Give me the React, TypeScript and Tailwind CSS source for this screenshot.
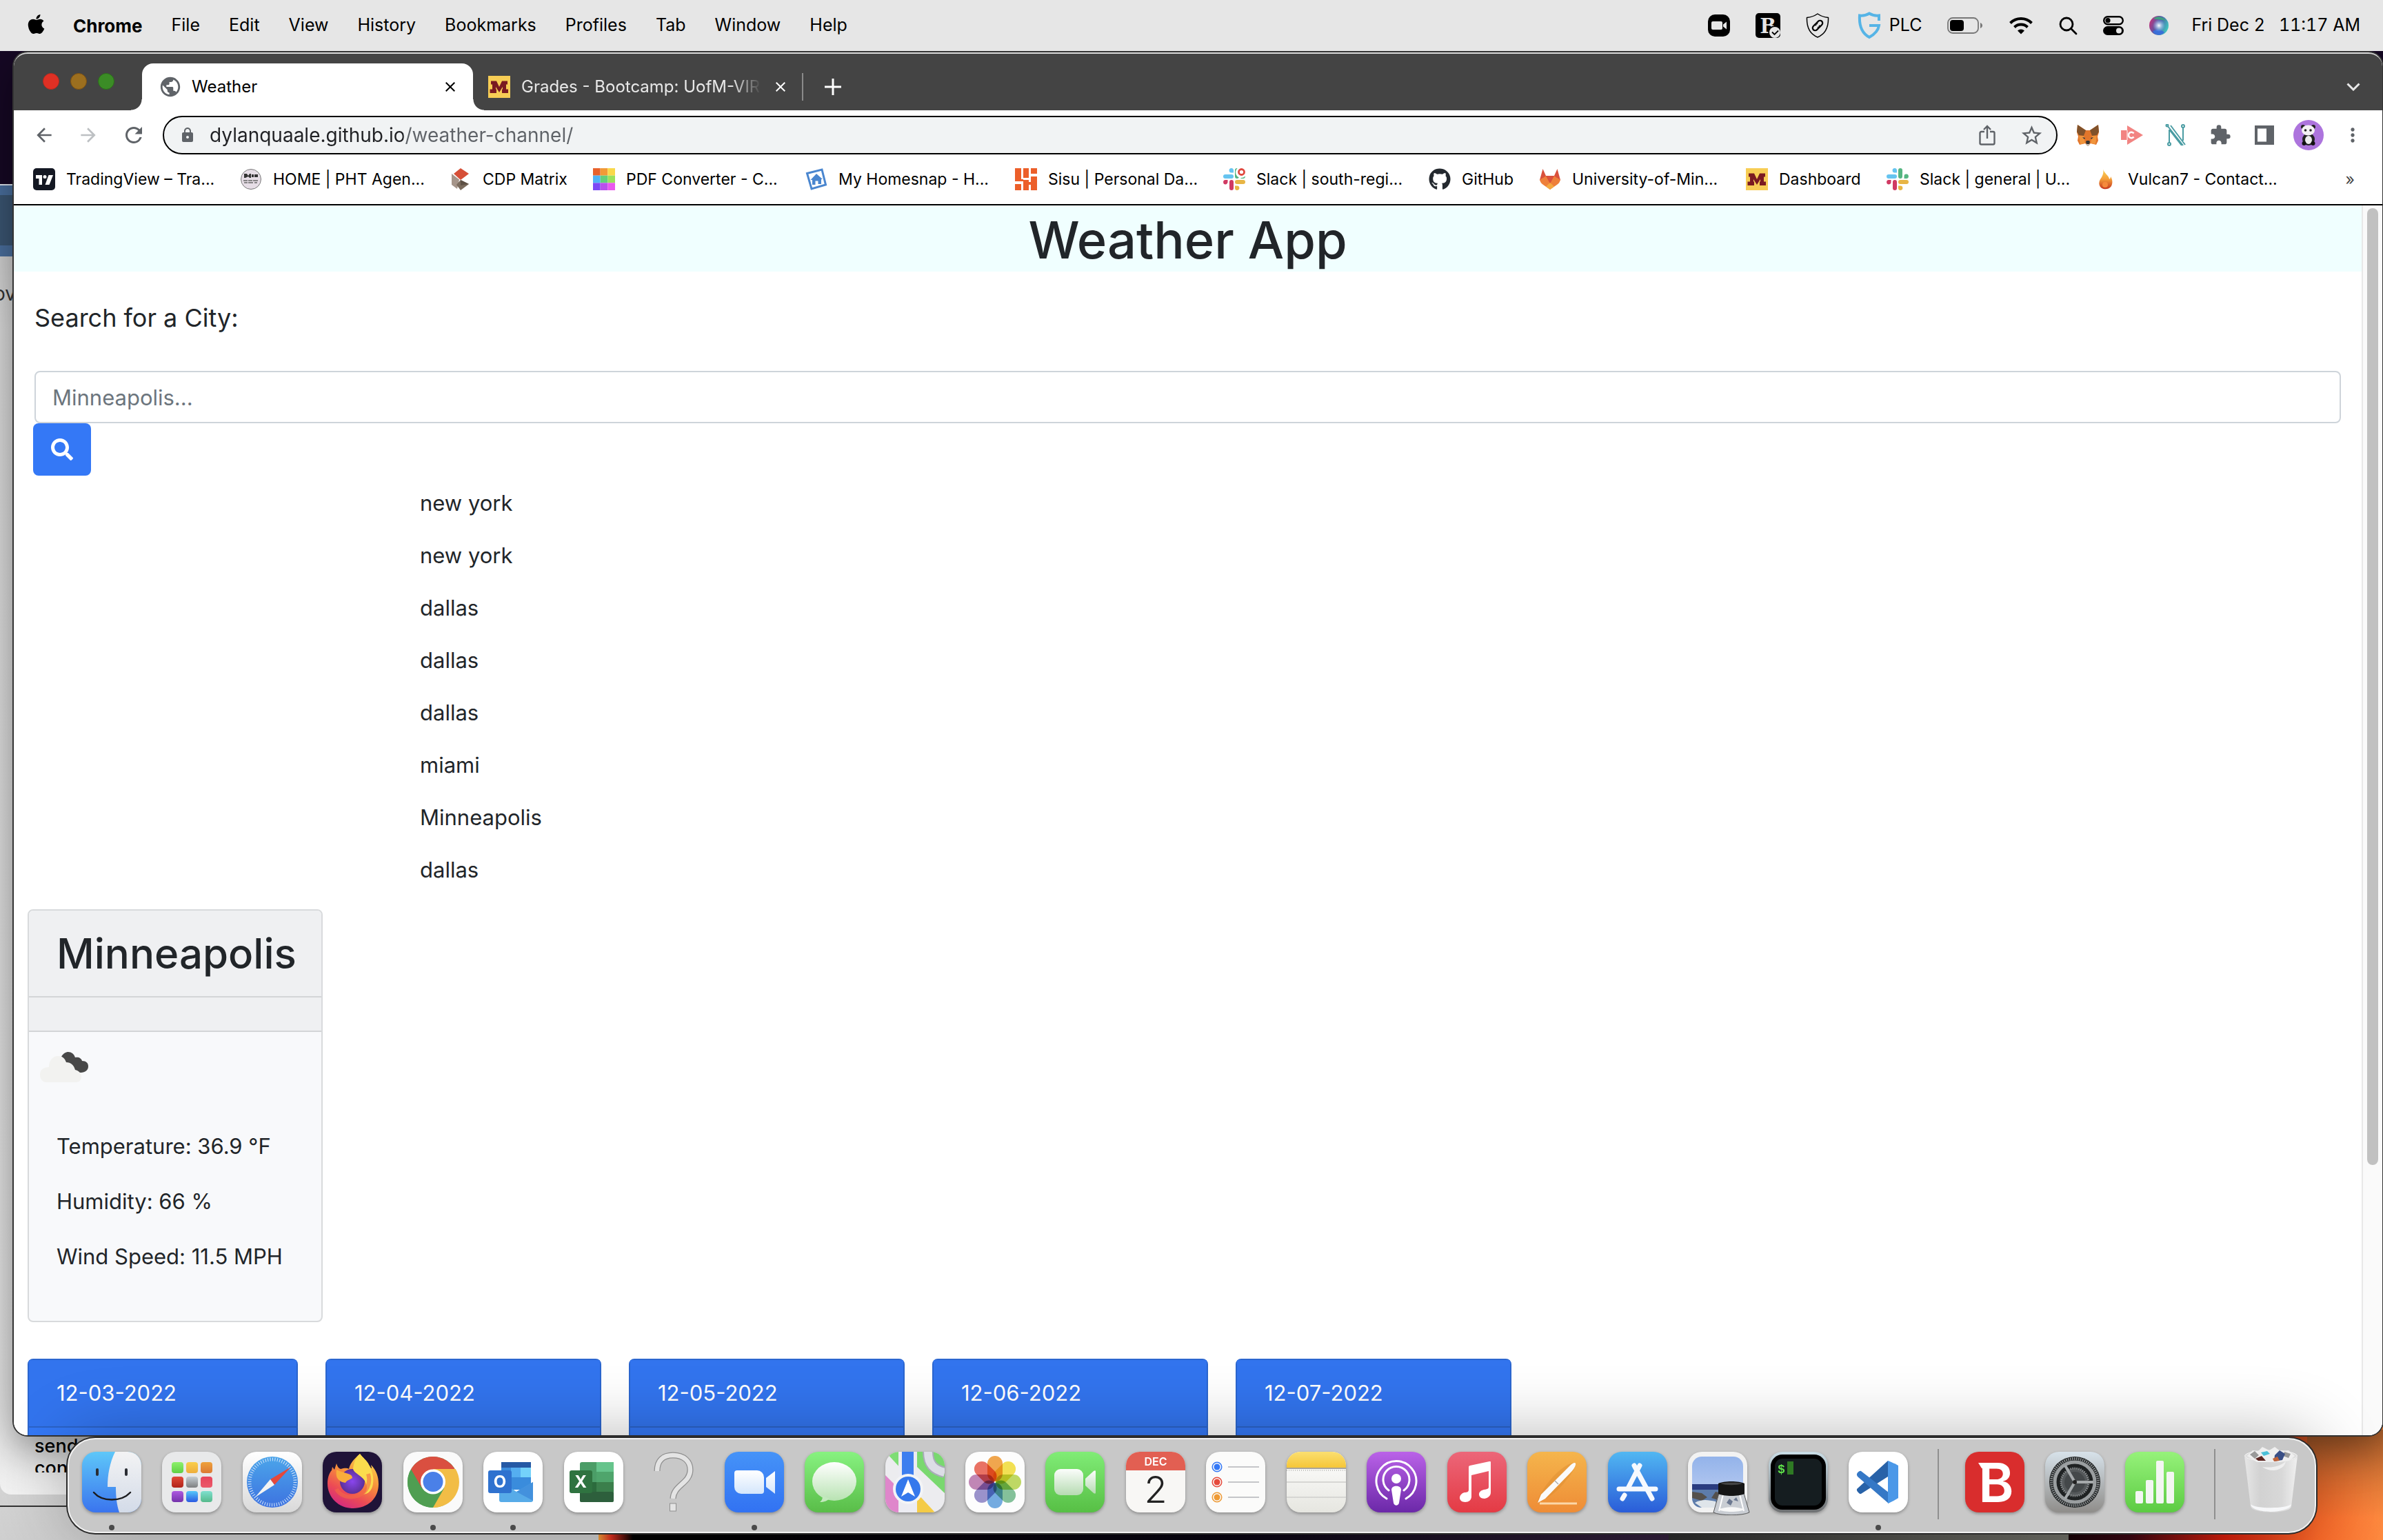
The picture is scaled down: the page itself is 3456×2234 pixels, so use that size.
import type { ReactNode } from "react";
import { FaApple, FaGithub, FaSearch } from "react-icons/fa";
import {
  MdArrowBack,
  MdArrowForward,
  MdClose,
  MdExtension,
  MdLock,
  MdMoreVert,
  MdPublic,
  MdRefresh,
  MdStarBorder,
} from "react-icons/md";

/* ---------- Menu bar ---------- */

const menus = ["File", "Edit", "View", "History", "Bookmarks", "Profiles", "Tab", "Window", "Help"];

function ZoomStatusIcon() {
  return (
    <svg viewBox="0 0 32 32" className="h-8 w-8">
      <rect width="32" height="32" rx="10" fill="#000" />
      <rect x="5" y="10" width="16" height="12" rx="2" fill="#e6e6e6" />
      <path d="M22 14.500 27 10.500V21.500L22 17.500z" fill="#e6e6e6" />
    </svg>
  );
}

function BitdefenderStatusIcon() {
  return (
    <svg viewBox="0 0 36 36" className="h-9 w-9">
      <rect width="36" height="36" rx="5" fill="#000" />
      <text x="7" y="29" fontFamily="Liberation Serif, serif" fontWeight="700" fontSize="34" fill="#e6e6e6">
        B
      </text>
      <circle cx="27.500" cy="27.500" r="9.200" fill="#000" />
      <circle cx="28" cy="28" r="8" fill="#e6e6e6" />
      <path d="m24 27.500 3.500 3.500 5.500-5.500" fill="none" stroke="#000" strokeWidth="1.800" />
    </svg>
  );
}

function ShieldLinkIcon() {
  return (
    <svg viewBox="0 0 34 36" className="h-9 w-[34px]" fill="none" stroke="#000" strokeLinejoin="round">
      <path d="M17 1c5 3.500 10 5 15.500 5.500C33 20 29 30 17 35 5 30 1 20 1.500 6.500 7 6 12 4.500 17 1z" strokeWidth="1.500" />
      <g strokeWidth="2.200" strokeLinecap="round" transform="rotate(45 17 18)">
        <path d="M14.500 19.500a3.500 3.500 0 0 1-1.200-2.500v-4a3.700 3.700 0 0 1 7.400 0v4c0 1-.4 1.800-1 2.500" />
        <path d="M19.500 16.500a3.500 3.500 0 0 1 1.200 2.500v4a3.700 3.700 0 0 1-7.400 0v-4c0-1 .4-1.800 1-2.500" />
      </g>
    </svg>
  );
}

function ShieldGIcon() {
  return (
    <svg viewBox="0 0 34 40" className="h-10 w-[34px]" fill="none" stroke="#56b4e6" strokeWidth="4">
      <path d="M31 13V5.500C26 6 21 5 17 2.500 13 5 8 6 3 5.500 2 21 6 31 17 37c9-5 13-10 14-17H17" />
    </svg>
  );
}

function BatteryIcon() {
  return (
    <svg viewBox="0 0 52 24" className="h-6 w-[52px]">
      <rect x="1" y="1" width="44" height="22" rx="7" fill="none" stroke="#777" strokeWidth="1.800" />
      <rect x="4" y="4" width="20" height="16" rx="4" fill="#000" />
      <path d="M48 8c4 1.500 4 6.500 0 8z" fill="#777" />
    </svg>
  );
}

function WifiIcon() {
  return (
    <svg viewBox="0 0 36 26" className="h-[26px] w-9" fill="none" stroke="#000" strokeWidth="4">
      <path d="M2.500 9.500a22 22 0 0 1 31 0" />
      <path d="M8.500 15.500a13.500 13.500 0 0 1 19 0" />
      <path d="m18 25.500-5-5a7 7 0 0 1 10 0z" fill="#000" stroke="none" />
    </svg>
  );
}

function ControlCenterIcon() {
  return (
    <svg viewBox="0 0 30 28" className="h-7 w-[30px]">
      <rect x="1.200" y="1.200" width="27.600" height="11" rx="5.500" fill="none" stroke="#000" strokeWidth="2.400" />
      <circle cx="7" cy="6.700" r="3.600" fill="#000" />
      <rect y="15" width="30" height="13" rx="6.500" fill="#000" />
      <circle cx="23" cy="21.500" r="4" fill="#e6e6e6" />
    </svg>
  );
}

function SiriIcon() {
  return (
    <svg viewBox="0 0 28 28" className="h-7 w-7">
      <defs>
        <linearGradient id="siriBase" x1="0" y1="0.300" x2="1" y2="0.700">
          <stop offset="0" stopColor="#c2347c" />
          <stop offset="0.450" stopColor="#4d5aa8" />
          <stop offset="1" stopColor="#3fd0c0" />
        </linearGradient>
        <radialGradient id="siriGlow">
          <stop offset="0" stopColor="#fff" />
          <stop offset="1" stopColor="#9fd4ff" stopOpacity="0" />
        </radialGradient>
      </defs>
      <circle cx="14" cy="14" r="14" fill="url(#siriBase)" />
      <path d="M6 4c6-5 14-3 18 3-6-2-12-1-18-3z" fill="#3f9f80" />
      <path d="M5 23c6-5 12-3 17 1-5 5-12 5-17-1z" fill="#3a6fd8" />
      <circle cx="14" cy="14" r="9" fill="url(#siriGlow)" />
    </svg>
  );
}

function MenuBar() {
  return (
    <header className="relative z-10 flex h-[74px] shrink-0 items-center justify-between bg-[#e6e6e6] pr-[33px] pl-[39px] text-[25px] text-black">
      <nav className="flex items-center gap-[42px]">
        <button aria-label="Apple menu">
          <FaApple className="-mt-1 h-8 w-[27px]" />
        </button>
        <button className="-ml-[2px] text-[26px] font-bold">Chrome</button>
        {menus.map((m) => (
          <button key={m}>{m}</button>
        ))}
      </nav>
      <div className="flex items-center gap-[37px]">
        <ZoomStatusIcon />
        <BitdefenderStatusIcon />
        <ShieldLinkIcon />
        <span className="ml-1 flex items-center gap-3">
          <ShieldGIcon />
          PLC
        </span>
        <BatteryIcon />
        <WifiIcon />
        <svg viewBox="0 0 27 27" className="h-[27px] w-[27px]" fill="none" stroke="#000" strokeWidth="2.800" strokeLinecap="round">
          <circle cx="11" cy="11" r="9" />
          <path d="m18 18 7 7" />
        </svg>
        <ControlCenterIcon />
        <SiriIcon />
        <span className="-ml-1 flex gap-5 whitespace-nowrap tabular-nums">
          <span>Fri Dec 2</span>
          <span>11:17 AM</span>
        </span>
      </div>
    </header>
  );
}

/* ---------- Browser chrome ---------- */

function MinnesotaIcon() {
  return (
    <svg viewBox="0 0 32 32" className="h-8 w-8 shrink-0">
      <rect width="32" height="32" fill="#f7cd55" />
      <path
        d="M4 7.500h8l4 8.500 4-8.500h8v5h-2v7h3V25h-9v-5.500h1V16l-5 8-5-8v3.500h1V25H2.500v-5.500H6v-7H4z"
        fill="#7a1a21"
      />
    </svg>
  );
}

function TradingViewIcon() {
  return (
    <svg viewBox="0 0 32 32" className="h-8 w-8">
      <rect width="32" height="32" rx="5" fill="#141823" />
      <path d="M4 10h9v14H8.500v-9H4zM22.500 10H29l-5.500 14h-6z" fill="#fff" />
      <circle cx="17" cy="12.500" r="2.500" fill="#fff" />
    </svg>
  );
}

function PhtIcon() {
  return (
    <svg viewBox="0 0 32 32" className="h-8 w-8">
      <circle cx="16" cy="16" r="14.500" fill="#e6dde6" stroke="#777" />
      <path d="M6 8h4l2 3 2-3h2v6h-2l-2-2-4 2H6zM17 9h3v4h-3zM21 9h5v4h-5z" fill="#333" />
      <path d="M5 18h6M12 18h6M19 18h7M6 21h5M12 21h7M21 21h4" stroke="#666" strokeWidth="1.500" />
    </svg>
  );
}

function CdpIcon() {
  return (
    <svg viewBox="0 0 32 32" className="h-8 w-8">
      <path d="m16 0 12 8-12 9-10-9z" fill="#d64f37" />
      <path d="M3 8 14 16.500 11 30 3 24z" fill="#a5958a" />
      <path d="m16 17 12 6-12 9-6-8z" fill="#7a6b5d" />
      <path d="m16 17 12 6-12 2z" fill="#5d5044" />
    </svg>
  );
}

function PdfIcon() {
  const colors = ["#e8622c", "#f19a37", "#f9d84a", "#50b3f5", "#63cf7b", "#9be15c", "#7b49f5", "#b950ec", "#ea58ee"];
  return (
    <svg viewBox="0 0 33 33" className="h-8 w-8">
      {colors.map((c, i) => (
        <rect key={c} x={(i % 3) * 11} y={Math.floor(i / 3) * 11} width="11" height="11" fill={c} />
      ))}
    </svg>
  );
}

function HomesnapIcon() {
  return (
    <svg viewBox="0 0 32 32" className="h-8 w-8">
      <path d="M2.500 7.500 24 2l5.500 22L9 30z" fill="#fff" stroke="#4a86cf" strokeWidth="3" />
      <path d="m16 8 9 8h-2v7h-4.500v-4.500h-4V24H10v-7H7.500z" fill="#4a86cf" />
    </svg>
  );
}

function SisuIcon() {
  return (
    <svg viewBox="0 0 32 32" className="h-8 w-8" fill="#ec5f2a">
      <path d="M0 0h9v19H0zM0 23h9v9H0zM12 0h8v14h-8zM12 17h8v15h-8zM23 0h9v8h-9zM23 12h9v20h-9z" />
      <path d="M9 16h3v3H9zM20 20h3v4h-3z" />
    </svg>
  );
}

function SlackIcon({ alert = false }: { alert?: boolean }) {
  return (
    <svg viewBox="0 0 32 32" className="h-8 w-8">
      <g fill="#66c4f0">
        <rect y="9" width="15" height="6" rx="3" />
        <path d="M15 6.500h-3A3.200 3.200 0 1 1 15 3z" />
      </g>
      <g fill="#55b581">
        <rect x="17" width="6" height="15" rx="3" />
        <path d="M25.500 15v-3a3.200 3.200 0 1 1 3.500 3z" />
      </g>
      <g fill="#e8b545">
        <rect x="17" y="17" width="15" height="6" rx="3" />
        <path d="M17 25.500h3a3.200 3.200 0 1 1-3 3.500z" />
      </g>
      <g fill="#d03a63">
        <rect x="9" y="17" width="6" height="15" rx="3" />
        <path d="M6.500 17v3A3.200 3.200 0 1 1 3 17z" />
      </g>
      {alert && (
        <>
          <circle cx="26" cy="6" r="8" fill="#fff" />
          <circle cx="26.500" cy="5.500" r="4" fill="#fff" stroke="#e0483e" strokeWidth="2.800" />
        </>
      )}
    </svg>
  );
}

function GitlabIcon() {
  return (
    <svg viewBox="0 0 32 32" className="h-8 w-8">
      <path d="M5.500 1 10 11h12l4.500-10L31 17 16 28 1 17z" fill="#d9503b" />
      <path d="M1 17c4-3 6-3 9-6l6 11 6-11c3 3 5 3 9 6-1 3-2 5-5 7L16 31 6 24c-3-2-4-4-5-7z" fill="#ee7f3a" />
      <path d="m10 11 6 11 6-11z" fill="#d9503b" />
      <path d="m16 21 6 5.500L16 31l-6-4.500z" fill="#f4a840" />
    </svg>
  );
}

function FlameIcon() {
  return (
    <svg viewBox="0 0 32 32" className="h-8 w-8">
      <defs>
        <linearGradient id="flame" x1="0" y1="0" x2="0" y2="1">
          <stop offset="0" stopColor="#f9d65c" />
          <stop offset="0.500" stopColor="#f5a03a" />
          <stop offset="1" stopColor="#c5371f" />
        </linearGradient>
      </defs>
      <path d="M12 1c1 6 9 10 9 15 2-1 2-3 2-4 3 5 3 10 1 14-3 5-12 6-16 1-4-6 0-11 2-14 2-4 3-7 2-12z" fill="url(#flame)" />
      <circle cx="15" cy="24" r="4" fill="#f58a3c" />
    </svg>
  );
}

const bookmarks: { label: string; icon: ReactNode; slot: string }[] = [
  { label: "TradingView – Tra...", icon: <TradingViewIcon />, slot: "w-[300px]" },
  { label: "HOME | PHT Agen...", icon: <PhtIcon />, slot: "w-[304px]" },
  { label: "CDP Matrix", icon: <CdpIcon />, slot: "w-[208px]" },
  { label: "PDF Converter - C...", icon: <PdfIcon />, slot: "w-[308px]" },
  { label: "My Homesnap - H...", icon: <HomesnapIcon />, slot: "w-[304px]" },
  { label: "Sisu | Personal Da...", icon: <SisuIcon />, slot: "w-[302px]" },
  { label: "Slack | south-regi...", icon: <SlackIcon alert />, slot: "w-[298px]" },
  { label: "GitHub", icon: <FaGithub className="h-8 w-8 text-[#24292f]" />, slot: "w-[160px]" },
  { label: "University-of-Min...", icon: <GitlabIcon />, slot: "w-[300px]" },
  { label: "Dashboard", icon: <MinnesotaIcon />, slot: "w-[204px]" },
  { label: "Slack | general | U...", icon: <SlackIcon />, slot: "w-[302px]" },
  { label: "Vulcan7 - Contact...", icon: <FlameIcon />, slot: "w-[300px]" },
];

function TabStrip() {
  return (
    <div className="flex h-[84px] items-end bg-[#444444] pr-8 text-[24px] text-white">
      <div className="flex h-[84px] w-[186px] shrink-0 items-center gap-4 pl-[42px]">
        <button aria-label="Close window" className="h-6 w-6 rounded-full border border-[#b52a20] bg-[#e03024]" />
        <button aria-label="Minimize window" className="h-6 w-6 rounded-full border border-[#7d5112] bg-[#9c6f1f]" />
        <button aria-label="Zoom window" className="h-6 w-6 rounded-full border border-[#2c6d1a] bg-[#3b8c26]" />
      </div>
      <div className="relative flex h-[68px] w-[480px] items-center rounded-t-2xl bg-white pr-[21px] pl-6 text-black">
        <span className="absolute bottom-0 -left-4 h-4 w-4 bg-[radial-gradient(circle_at_0_0,transparent_15px,white_16px)]" />
        <span className="absolute -right-4 bottom-0 h-4 w-4 bg-[radial-gradient(circle_at_100%_0,transparent_15px,white_16px)]" />
        <MdPublic className="h-[34px] w-[34px] text-[#5f6368]" />
        <span className="flex-1 pl-[14px]">Weather</span>
        <button aria-label="Close tab">
          <MdClose className="h-6 w-6" />
        </button>
      </div>
      <div className="flex h-[68px] w-[477px] items-center border-0 pl-[22px]">
        <MinnesotaIcon />
        <span className="ml-4 w-[348px] overflow-hidden whitespace-nowrap text-[#e8e8e8] [mask-image:linear-gradient(to_right,black_88%,transparent)]">
          Grades - Bootcamp: UofM-VIRT
        </span>
        <button aria-label="Close tab" className="ml-4">
          <MdClose className="h-6 w-6" />
        </button>
      </div>
      <div className="flex h-[68px] flex-1 items-center justify-between">
        <div className="flex items-center">
          <span className="h-10 w-[2px] bg-[#8a8a8a]" />
          <button aria-label="New tab" className="ml-[30px]">
            <svg viewBox="0 0 26 26" className="h-[26px] w-[26px]" stroke="#fff" strokeWidth="3">
              <path d="M13 1v24M1 13h24" />
            </svg>
          </button>
        </div>
        <button aria-label="Search tabs">
          <svg viewBox="0 0 20 12" className="h-3 w-5" fill="none" stroke="#e8e8e8" strokeWidth="3">
            <path d="m1.500 1.500 8.500 8.500 8.500-8.500" />
          </svg>
        </button>
      </div>
    </div>
  );
}

function FoxIcon() {
  return (
    <svg viewBox="0 0 32 32" className="h-8 w-8">
      <path d="m1 1 12 8h6L31 1l1 11-2 6 1 6-3 6-8-2-3 3h-2l-3-3-8 2-3-6 1-6-2-6z" fill="#e2762b" />
      <path d="m1 1 12 8-3 8-7-1-3-5zM31 1 19 9l3 8 7-1 3-5z" fill="#80522b" />
      <path d="m3 17 7 0 2 11-7 1zM29 17h-7l-2 11 7 1z" fill="#f0943b" />
      <path d="m8 19 4 1-1 2zM24 19l-4 1 1 2z" fill="#2b3440" />
      <path d="m13 26 1-2h4l1 2-1 3h-4z" fill="#333" />
      <path d="m12 28 2 1h4l2-1-3 4h-2z" fill="#c9bdb1" />
    </svg>
  );
}

function Toolbar() {
  return (
    <div className="flex h-[72px] items-center pr-[27px] pl-7 text-[#5f6368]">
      <div className="flex items-center gap-8">
        <button aria-label="Back">
          <MdArrowBack className="h-8 w-8" />
        </button>
        <button aria-label="Forward" className="text-[#bdc0c3]">
          <MdArrowForward className="h-8 w-8" />
        </button>
        <button aria-label="Reload">
          <MdRefresh className="h-9 w-9" />
        </button>
      </div>
      <div className="ml-6 flex h-14 flex-1 items-center rounded-full border-2 border-black bg-[#f1f3f4] pr-[18px] pl-[22px]">
        <MdLock className="h-6 w-6" />
        <label htmlFor="address" className="sr-only">
          Address
        </label>
        <input
          id="address"
          defaultValue="dylanquaale.github.io/weather-channel/"
          className="ml-5 flex-1 bg-[linear-gradient(to_right,#202124_281px,#5f6368_281px)] bg-clip-text text-[28px] text-transparent outline-none"
        />
        <button aria-label="Share">
          <svg viewBox="0 0 24 30" className="h-[30px] w-6" fill="none" stroke="#5f6368" strokeWidth="2.400">
            <path d="M8 10H3.500A2 2 0 0 0 1.500 12v14.500a2 2 0 0 0 2 2h17a2 2 0 0 0 2-2V12a2 2 0 0 0-2-2H16M12 20V2M7 7l5-5 5 5" />
          </svg>
        </button>
        <button aria-label="Bookmark this page" className="ml-[35px]">
          <MdStarBorder className="h-[35px] w-[35px]" />
        </button>
      </div>
      <div className="ml-7 flex items-center gap-8">
        <button aria-label="Fox wallet">
          <FoxIcon />
        </button>
        <button aria-label="Screen recorder">
          <svg viewBox="0 0 32 32" className="h-8 w-8">
            <path d="M0 9h9V2l23 14L9 30v-7H0z" fill="#f28482" />
            <path d="M18.500 13.500a4.200 4.200 0 1 0 0 5" fill="none" stroke="#fff" strokeWidth="2.600" />
            <path d="M9 9v14" stroke="#fff" />
          </svg>
        </button>
        <button aria-label="Notes extension">
          <svg viewBox="0 0 32 32" className="h-8 w-8" fill="none" stroke="#4a9ca3" strokeWidth="2">
            <path d="M6 28V8M26 4v20M3 2l23 29M8 2l21 28M6 8l18 23" />
            <circle cx="6" cy="29" r="2" fill="#fff" />
            <circle cx="26" cy="3" r="2" fill="#fff" />
            <circle cx="3" cy="2" r="1.500" fill="#fff" />
          </svg>
        </button>
        <button aria-label="Extensions">
          <MdExtension className="h-8 w-8" />
        </button>
        <button aria-label="Side panel">
          <svg viewBox="0 0 32 32" className="h-8 w-8">
            <path d="M2 2h28v28H2zM6 6.500v19h13v-19z" fill="#5f6368" fillRule="evenodd" />
          </svg>
        </button>
        <button aria-label="Profile" className="-mx-[6px]">
          <svg viewBox="0 0 44 44" className="h-11 w-11">
            <circle cx="22" cy="22" r="22" fill="#ad74dd" />
            <ellipse cx="22" cy="28" rx="9" ry="9" fill="#222" />
            <ellipse cx="22" cy="29" rx="5" ry="6" fill="#eee" />
            <circle cx="14" cy="10" r="3" fill="#222" />
            <circle cx="29" cy="10" r="3" fill="#222" />
            <ellipse cx="21.500" cy="15" rx="9.500" ry="7.500" fill="#f4f1f4" />
            <circle cx="17.500" cy="15" r="1.800" fill="#222" />
            <circle cx="25" cy="15" r="1.800" fill="#222" />
            <circle cx="15.500" cy="34" r="3" fill="#111" />
            <circle cx="28.500" cy="34" r="3" fill="#111" />
          </svg>
        </button>
        <button aria-label="Browser menu">
          <MdMoreVert className="h-9 w-8" />
        </button>
      </div>
    </div>
  );
}

function BookmarksBar() {
  return (
    <nav className="flex h-[66px] items-center border-b-2 border-black pr-10 pb-2 pl-7 text-[23px] text-black">
      {bookmarks.map((b, i) => (
        <a key={i} href="#bookmark" className={`flex shrink-0 items-center gap-4 whitespace-nowrap ${b.slot}`}>
          {b.icon}
          {b.label}
        </a>
      ))}
      <button aria-label="More bookmarks" className="ml-auto text-[#444]">
        »
      </button>
    </nav>
  );
}

/* ---------- Web page ---------- */

const history = ["new york", "new york", "dallas", "dallas", "dallas", "miami", "Minneapolis", "dallas"];

const forecast = [
  { date: "12-03-2022", width: "w-[392px]" },
  { date: "12-04-2022", width: "w-[400px]" },
  { date: "12-05-2022", width: "w-[400px]" },
  { date: "12-06-2022", width: "w-[400px]" },
  { date: "12-07-2022", width: "w-[400px]" },
];

function BrokenCloudsIcon() {
  return (
    <svg viewBox="0 0 70 46" className="h-[46px] w-[70px]">
      <path d="M31 8C36-2 48-1 51 9c5-1 9 1 10 5 6 0 9 3 9 8 0 7-8 11-16 8-6-2-12-6-23-10z" fill="#484848" />
      <path
        d="M10 45C3 45 0 40 0 34c0-7 5-11 13-11C13 12 20 6 27 7c5 0 9 3 11 9 7 0 11 4 13 11 5 1 9 5 9 10 0 4-2 8-8 8z"
        fill="#f2f2f0"
      />
    </svg>
  );
}

function WeatherPage() {
  return (
    <div className="flex min-h-0 flex-1 overflow-hidden bg-white">
      <main className="flex-1 text-[31px] leading-[48px] text-[#212529]">
        <h1 className="bg-[#f0ffff] pt-1 text-center text-[74px] leading-[92px] font-medium">Weather App</h1>
        <form className="px-[30px] pt-[43px]" onSubmit={(e) => e.preventDefault()}>
          <label htmlFor="city" className="block text-[36px]">
            Search for a City:
          </label>
          <input
            id="city"
            placeholder="Minneapolis..."
            className="mt-[53px] block h-[76px] w-full rounded-lg border-2 border-[#ced4da] bg-white px-6 placeholder:text-[#6c757d]"
          />
          <button aria-label="Search" className="-ml-[2px] flex h-[76px] w-[84px] items-center justify-center rounded-lg bg-[#3478f6] text-white">
            <FaSearch className="h-8 w-8" />
          </button>
        </form>
        <ul className="pt-[2px] pl-[589px]">
          {history.map((city, i) => (
            <li key={i} className="flex h-[76px] items-center">
              <button>{city}</button>
            </li>
          ))}
        </ul>
        <section className="mt-[19px] ml-5 w-[428px] overflow-hidden rounded-lg border-2 border-[#d8dadc] bg-[#f8f9fb]">
          <h2 className="border-b-2 border-[#d3d5d7] bg-[#eff0f2] px-10 py-6 text-[60px] leading-[76px] font-medium">
            Minneapolis
          </h2>
          <div className="h-[50px] border-b-2 border-[#d3d5d7] bg-[#eff0f2]" />
          <div className="pt-7 pl-4">
            <BrokenCloudsIcon />
          </div>
          <div className="space-y-8 px-10 pt-[68px] pb-[69px]">
            <p>Temperature: 36.9 °F</p>
            <p>Humidity: 66 %</p>
            <p className="whitespace-nowrap">Wind Speed: 11.5 MPH</p>
          </div>
        </section>
        <section className="mt-[53px] flex gap-10 pl-5 text-white">
          {forecast.map((day) => (
            <article key={day.date} className={`h-[500px] rounded-lg border-2 border-[#2b66cf] bg-[#3478f6] ${day.width}`}>
              <h3 className="border-b-2 border-[#2b63c8] bg-[#3274ee] px-10 py-6">{day.date}</h3>
            </article>
          ))}
        </section>
      </main>
      <div className="w-[30px] shrink-0 border-l-2 border-[#e8e8e8] bg-[#fafafa] pt-1">
        <div className="mx-auto h-[1388px] w-4 rounded-full bg-[#c1c1c1]" />
      </div>
    </div>
  );
}

/* ---------- Dock ---------- */

function Tile({ fill, children, id }: { fill: string; children?: ReactNode; id: string }) {
  return (
    <svg viewBox="0 0 86 88" className="h-[88px] w-[86px] overflow-visible drop-shadow-[0_2px_2px_rgba(0,0,0,0.3)]">
      <defs>
        <clipPath id={`clip-${id}`}>
          <rect width="86" height="88" rx="20" />
        </clipPath>
      </defs>
      <g clipPath={`url(#clip-${id})`}>
        <rect width="86" height="88" fill={fill} />
        {children}
      </g>
    </svg>
  );
}

function Fade({ id, from, to }: { id: string; from: string; to: string }) {
  return (
    <linearGradient id={id} x1="0" y1="0" x2="0" y2="1">
      <stop offset="0" stopColor={from} />
      <stop offset="1" stopColor={to} />
    </linearGradient>
  );
}

const launchColors = [
  ["#8df06c", "#5fd044"],
  ["#f9ce4c", "#eeae3c"],
  ["#eea23c", "#dc7a34"],
  ["#e24a38", "#b0241a"],
  ["#c5ced3", "#7d7f80"],
  ["#e8445c", "#ea5a6a"],
  ["#ac5ae0", "#7433ab"],
  ["#56c8fa", "#2a59e2"],
  ["#7fe0cf", "#55b98b"],
];

const petals = ["#f0982f", "#f2dd35", "#b5d44a", "#6fb98a", "#5d9fdd", "#8a80c4", "#b872ab", "#e85a4a"];

const finder = (
  <Tile id="finder" fill="url(#finderL)">
    <defs>
      <Fade id="finderL" from="#5ec7f9" to="#3a74ee" />
      <Fade id="finderR" from="#f3f3f4" to="#d3dbe8" />
    </defs>
    <path d="M48 0c-8 16-11 34-11 51h12c0 13 1 25 5 37h32V0z" fill="url(#finderR)" />
    <path d="M22 26v7M64 26v7" stroke="#2a2d33" strokeWidth="4" strokeLinecap="round" />
    <path d="M17 59c12 14 40 14 53 0" fill="none" stroke="#1b1c1f" strokeWidth="2.500" strokeLinecap="round" />
  </Tile>
);

const launchpad = (
  <Tile id="launchpad" fill="#e8e9ea">
    {launchColors.map(([a, b], i) => (
      <g key={i}>
        <defs>
          <Fade id={`lp${i}`} from={a} to={b} />
        </defs>
        <rect x={14 + (i % 3) * 21} y={15 + Math.floor(i / 3) * 21} width="17" height="16" rx="4" fill={`url(#lp${i})`} />
      </g>
    ))}
  </Tile>
);

const safari = (
  <Tile id="safari" fill="url(#safBg)">
    <defs>
      <Fade id="safBg" from="#ffffff" to="#d9d9d9" />
      <Fade id="safDial" from="#4ba5ea" to="#3d72e0" />
    </defs>
    <circle cx="43" cy="44" r="37" fill="url(#safDial)" />
    <circle cx="43" cy="44" r="33" fill="none" stroke="#d5e6fa" strokeWidth="5" strokeDasharray="1 2.450" />
    <path d="M70 22 40 40l6 8z" fill="#e4483c" />
    <path d="m18 66 22-26 6 8z" fill="#f3f3f3" />
  </Tile>
);

const firefox = (
  <Tile id="firefox" fill="#1f1338">
    <defs>
      <linearGradient id="ffBody" x1="0.800" y1="0" x2="0.300" y2="1">
        <stop offset="0" stopColor="#fbe04d" />
        <stop offset="0.450" stopColor="#f68c3b" />
        <stop offset="0.750" stopColor="#ec4a55" />
        <stop offset="1" stopColor="#d32a80" />
      </linearGradient>
      <radialGradient id="ffCore">
        <stop offset="0" stopColor="#8a45ee" />
        <stop offset="1" stopColor="#5b3199" />
      </radialGradient>
    </defs>
    <path
      d="M54 3c4 6 10 9 13 16 2 3 3 5 4 5 0-2-1-4-1-5 8 8 11 17 11 28 0 21-16 35-37 35S7 66 7 46c0-9 3-16 6-19l1-5 3 4 3-9c1 4 3 7 6 8 5-1 8-2 12 0 2-9 8-15 16-22z"
      fill="url(#ffBody)"
    />
    <circle cx="43" cy="43" r="18" fill="url(#ffCore)" />
    <path d="M20 26c6 3 12 4 17 6 4 1 6 3 6 6-4 3-8 3-10 7 0 0-7-1-8-3-5-3-6-8-5-16z" fill="#f9ad3b" />
    <path d="M54 3c4 6 10 9 13 16 6 10 8 22 5 32-3 8-8 10-13 11 6-5 6-12 3-18-3-8-17-13-18-19 1-9 4-17 10-22z" fill="#fbdc4d" />
    <path d="M66 32c4 14-2 28-16 32-12 4-25 0-30-10" fill="none" stroke="#f36a45" strokeWidth="6" opacity="0.600" />
  </Tile>
);

const chrome = (
  <Tile id="chrome" fill="#fafafa">
    <circle cx="43" cy="44" r="37" fill="#4f9e52" />
    <path d="M43 7a37 37 0 0 0-32 18.500L27 53l16-26h32.700A37 37 0 0 0 43 7z" fill="#da4f40" />
    <path d="M43 25h32.700A37 37 0 0 1 43 81l16-28z" fill="#f2bd46" />
    <path d="M11 25.500 27 53.500A37 37 0 0 0 43 81 37 37 0 0 1 11 25.500z" fill="#4f9e52" />
    <circle cx="43" cy="43.500" r="18" fill="#fff" />
    <circle cx="43" cy="43.500" r="14.500" fill="#4a80e8" />
  </Tile>
);

const outlook = (
  <Tile id="outlook" fill="#ffffff">
    <rect x="26" y="15" width="43" height="40" rx="3" fill="#3a8cdc" />
    <rect x="26" y="15" width="43" height="8" fill="#2559a5" />
    <rect x="54" y="23" width="15" height="14" fill="#74d2fa" />
    <rect x="40" y="23" width="14" height="14" fill="#55aef0" />
    <rect x="26" y="37" width="14" height="14" fill="#2a66bf" />
    <path d="M23 50h13l12 8 24-14v26a3 3 0 0 1-3 3H26a3 3 0 0 1-3-3z" fill="#57abe8" />
    <path d="m36 50 12 8 24 13V44L48 58z" fill="#4391dd" />
    <rect x="7" y="27" width="34" height="33" rx="3" fill="#2f72cf" />
    <text x="24" y="52" textAnchor="middle" fontFamily="Inter, sans-serif" fontWeight="700" fontSize="24" fill="#fff">
      O
    </text>
  </Tile>
);

const excel = (
  <Tile id="excel" fill="#ffffff">
    <rect x="23" y="15" width="49" height="58" rx="3" fill="#4b9d67" />
    <rect x="47" y="15" width="25" height="14" fill="#66c48c" />
    <rect x="47" y="29" width="25" height="15" fill="#4fa56c" />
    <rect x="23" y="44" width="24" height="14" fill="#2c6b3d" />
    <rect x="47" y="44" width="25" height="14" fill="#3b7f4c" />
    <rect x="23" y="58" width="49" height="15" rx="2" fill="#2d5f3c" />
    <rect x="8" y="27" width="33" height="33" rx="3" fill="#2f7340" />
    <text x="24" y="52" textAnchor="middle" fontFamily="Inter, sans-serif" fontWeight="700" fontSize="24" fill="#fff">
      X
    </text>
  </Tile>
);

const unknownApp = (
  <svg viewBox="0 0 86 88" className="h-[88px] w-[86px] overflow-visible">
    <path
      d="M19 28C19 12 28 5 42 5c16 0 25 9 25 21 0 20-24 22-25 42"
      fill="none"
      stroke="#8f8f8f"
      strokeWidth="9"
    />
    <path d="M19 28C19 12 28 5 42 5c16 0 25 9 25 21 0 20-24 22-25 42" fill="none" stroke="#e4e4e4" strokeWidth="6.500" />
    <rect x="37.500" y="75" width="9" height="11" fill="#e4e4e4" stroke="#8f8f8f" />
  </svg>
);

const zoomApp = (
  <Tile id="zoom" fill="url(#zoomBg)">
    <defs>
      <Fade id="zoomBg" from="#4593f8" to="#3272f2" />
      <Fade id="zoomCam" from="#ffffff" to="#d4e6fc" />
    </defs>
    <path d="M14 31a4 4 0 0 1 4-4h29a10 10 0 0 1 10 10v20a4 4 0 0 1-4 4H24a10 10 0 0 1-10-10z" fill="url(#zoomCam)" />
    <path d="m60 38 13-10v33L60 51z" fill="url(#zoomCam)" />
  </Tile>
);

const messages = (
  <Tile id="messages" fill="url(#msgBg)">
    <defs>
      <Fade id="msgBg" from="#87f280" to="#59bd48" />
      <Fade id="msgBubble" from="#ffffff" to="#b8e3b2" />
    </defs>
    <ellipse cx="43" cy="43" rx="32" ry="28" fill="url(#msgBubble)" />
    <path d="M26 64c0 4-1 7-4 9 6 0 11-2 14-5z" fill="#c3e9be" />
  </Tile>
);

const maps = (
  <Tile id="maps" fill="#ececef">
    <path d="M0 0h24v26L0 0z" fill="#7edd75" />
    <path d="M46 0h40v60L46 22z" fill="#79d86f" />
    <path d="M0 34 24 58v30H0z" fill="#df86cb" />
    <path d="M46 88V60l26 28z" fill="#f4cb46" />
    <path d="M62 0c0 18 8 26 24 30" fill="none" stroke="#a9acb8" strokeWidth="16" />
    <path d="M62 0c0 18 8 26 24 30" fill="none" stroke="#dcdde6" strokeWidth="12" />
    <rect x="19" width="27" height="88" fill="#ececf2" />
    <rect x="24" width="17" height="50" fill="#3d7eef" />
    <circle cx="33" cy="54" r="22" fill="#f3f4f6" />
    <circle cx="33" cy="54" r="18" fill="#3578ec" />
    <path d="m33 40 10 25-10-6-10 6z" fill="#fff" />
  </Tile>
);

const photos = (
  <Tile id="photos" fill="#fdfdfd">
    {petals.map((c, i) => (
      <rect
        key={c}
        x="32"
        y="6"
        width="22"
        height="37"
        rx="11"
        fill={c}
        opacity="0.850"
        transform={`rotate(${i * 45} 43 44)`}
        className="mix-blend-multiply"
      />
    ))}
  </Tile>
);

const facetime = (
  <Tile id="facetime" fill="url(#ftBg)">
    <defs>
      <Fade id="ftBg" from="#80ec76" to="#57bf45" />
      <Fade id="ftCam" from="#fbfdfb" to="#b6dbb2" />
    </defs>
    <rect x="13" y="25" width="42" height="38" rx="9" fill="url(#ftCam)" />
    <path d="m58 39 12-11c2-1 3-1 3 1v30c0 2-1 2-3 1L58 49z" fill="url(#ftCam)" />
  </Tile>
);

const calendar = (
  <Tile id="calendar" fill="#f8f7f5">
    <rect width="86" height="27" fill="#e25f52" />
    <text x="43" y="20" textAnchor="middle" fontFamily="Inter, sans-serif" fontWeight="600" fontSize="16" fill="#fff">
      DEC
    </text>
    <text x="43" y="74" textAnchor="middle" fontFamily="Inter, sans-serif" fontWeight="300" fontSize="54" fill="#222">
      2
    </text>
  </Tile>
);

const reminders = (
  <Tile id="reminders" fill="#fbfbfa">
    {["#3478f6", "#e64a3c", "#ee9a35"].map((c, i) => (
      <g key={c}>
        <circle cx="16" cy={22 + i * 22} r="4.500" fill={c} />
        <circle cx="16" cy={22 + i * 22} r="6.800" fill="none" stroke={c} strokeWidth="1.500" />
        <path d={`M32 ${22 + i * 22}h45`} stroke="#b3b5b9" strokeWidth="1.500" />
      </g>
    ))}
  </Tile>
);

const notes = (
  <Tile id="notes" fill="url(#notesBg)">
    <defs>
      <Fade id="notesBg" from="#ffffff" to="#e6e6e0" />
      <Fade id="notesTop" from="#fbdf70" to="#f6c638" />
    </defs>
    <rect width="86" height="23" fill="url(#notesTop)" />
    <path d="M0 24h86" stroke="#a9a49a" strokeWidth="2" />
    <path d="M0 27h86" stroke="#c4c4c0" strokeWidth="2" strokeDasharray="1 2" />
    <path d="M0 44h86M0 66h86" stroke="#d6d6d3" strokeWidth="2" />
  </Tile>
);

const podcasts = (
  <Tile id="podcasts" fill="url(#podBg)">
    <defs>
      <Fade id="podBg" from="#ba62e8" to="#6b28a8" />
    </defs>
    <g fill="none" stroke="#fff" strokeWidth="3" strokeLinecap="round">
      <path d="M29 68a29 29 0 1 1 28 0" />
      <path d="M32 56a19 19 0 1 1 22 0" />
    </g>
    <circle cx="43" cy="39" r="7" fill="#fff" />
    <path d="M36 55c0-7 14-7 14 0l-3 19c-1 5-7 5-8 0z" fill="#fff" />
  </Tile>
);

const music = (
  <Tile id="music" fill="url(#musBg)">
    <defs>
      <Fade id="musBg" from="#ec6679" to="#e43a44" />
    </defs>
    <path
      d="M31 22c0-1 1-2 2-2l28-6c2 0 2 0 2 2v43c0 5-4 8-9 9-5 0-8-3-8-6 0-4 3-6 7-7 5-1 7-1 7-4V28l-25 6v31c0 5-4 8-9 8-5 0-8-3-8-6 0-4 3-7 7-8 4 0 6-1 6-4z"
      fill="#fff"
    />
  </Tile>
);

const pages = (
  <Tile id="pages" fill="url(#pagBg)">
    <defs>
      <Fade id="pagBg" from="#f5b54c" to="#ee8c36" />
    </defs>
    <path d="M14 74c2-9 10-22 20-34 12-14 26-24 34-24 5 4-4 17-16 31C41 60 26 70 14 74z" fill="#d98a2d" opacity="0.400" />
    <path d="M15 74 20 62 62 20c5-5 9-5 8-1s-4 8-8 12L26 68z" fill="#fafafa" />
    <path d="m40 42 5 5" stroke="#aaa" strokeWidth="1.500" />
    <path d="M18 75h54" stroke="#fbd7a8" strokeWidth="3" />
  </Tile>
);

const appStore = (
  <Tile id="appstore" fill="url(#asBg)">
    <defs>
      <Fade id="asBg" from="#51b7f2" to="#2a5cd8" />
    </defs>
    <g stroke="#f6f9fe" strokeWidth="7" strokeLinecap="round">
      <path d="M46 20 30 51" />
      <path d="m38 20 26 48" />
      <path d="M16 54h53" />
      <path d="m24 63-3 5" />
    </g>
  </Tile>
);

const preview = (
  <div className="relative">
    <Tile id="preview" fill="#f2f2f2">
      <defs>
        <Fade id="preSky" from="#93b3ea" to="#c3d2f3" />
      </defs>
      <rect x="6" y="7" width="74" height="74" rx="14" fill="url(#preSky)" />
      <rect x="6" y="47" width="74" height="8" fill="#2a3c80" />
      <path d="M6 55h74v20c-4 5-9 6-14 6H20C11 81 6 75 6 67z" fill="#5d7cab" />
      <path d="m6 58 14 2 8 6-8 5-14-4zM40 58l14 3v12l-20-6z" fill="#54504c" />
      <path d="M10 74c10-6 20-4 30-2l4 9H20z" fill="#dfe5ea" />
    </Tile>
    <svg viewBox="0 0 54 50" className="absolute -right-1 -bottom-1 h-[50px] w-[54px]">
      <path d="M9 18h36l8 28c-10 5-42 5-52 0z" fill="#c9cdd3" stroke="#555" />
      <path d="m15 20-6 24M39 20l6 24" stroke="#fff" strokeWidth="2" />
      <path d="M8 42c10-5 28-5 38 0-8 4-30 4-38 0z" fill="#f8f8f8" />
      <path d="m20 32 4-6 5 4-3 6zM30 28l4-4 3 6z" fill="#6c7890" />
      <path d="M8 4c8-4 30-4 38 0v15c-8 4-30 4-38 0z" fill="#151515" />
      <path d="M11 4c8-2 24-2 32 0-8 3-24 3-32 0z" fill="#444" />
    </svg>
  </div>
);

const terminal = (
  <Tile id="terminal" fill="url(#termEdge)">
    <defs>
      <Fade id="termEdge" from="#c9dde6" to="#6e7072" />
    </defs>
    <rect x="3" y="4" width="80" height="80" rx="17" fill="#000" />
    <rect x="9" y="10" width="68" height="68" rx="11" fill="#151d20" />
    <text x="13" y="31" fontFamily="Liberation Mono, monospace" fontWeight="700" fontSize="18" fill="#5ee04a">
      $
    </text>
    <rect x="27" y="14" width="9" height="19" fill="#2f7a24" />
  </Tile>
);

const vscode = (
  <Tile id="vscode" fill="#ffffff">
    <path d="m12 54 45-41v23L18 61c-2 1-7-4-6-7z" fill="#2862a8" />
    <path d="M12 34c-1-3 4-7 6-6l40 31v16L13 36z" fill="#3578c6" />
    <path d="M57 13c1 0 14 6 15 7v47c-1 1-14 8-15 8z" fill="#4b98e8" />
  </Tile>
);

const bitdefender = (
  <Tile id="bitdefender" fill="#d92d2d">
    <text x="45" y="73" textAnchor="middle" fontFamily="Inter, sans-serif" fontWeight="600" fontSize="78" fill="#fff">
      B
    </text>
    <path d="M19 16h12v8h-7z" fill="#fff" />
  </Tile>
);

const settings = (
  <Tile id="settings" fill="url(#setBg)">
    <defs>
      <Fade id="setBg" from="#d7e2ea" to="#8f8d8a" />
    </defs>
    <circle cx="43" cy="44" r="37" fill="#1f2223" />
    <circle cx="43" cy="44" r="34" fill="none" stroke="#8c9092" strokeWidth="4" strokeDasharray="1.500 1.500" />
    <circle cx="43" cy="44" r="29" fill="none" stroke="#9a9ea0" strokeWidth="5" />
    <circle cx="43" cy="44" r="20" fill="#55595b" stroke="#8c9092" strokeWidth="3" strokeDasharray="1.500 1.500" />
    <circle cx="43" cy="44" r="15" fill="#44484a" />
    <path d="M43 44h27M43 44 29 20M43 44 29 68" stroke="#a5a9ab" strokeWidth="4" />
    <circle cx="43" cy="44" r="3" fill="#222" />
  </Tile>
);

const numbers = (
  <Tile id="numbers" fill="url(#numBg)">
    <defs>
      <Fade id="numBg" from="#96f27a" to="#5ccb43" />
    </defs>
    <g fill="#f3f6f2">
      <rect x="15" y="57" width="11" height="18" rx="2" />
      <rect x="30" y="41" width="11" height="34" rx="2" />
      <rect x="45" y="13" width="11" height="62" rx="2" />
      <rect x="60" y="29" width="11" height="46" rx="2" />
    </g>
  </Tile>
);

const trash = (
  <svg viewBox="0 0 86 100" className="h-[100px] w-[86px]">
    <defs>
      <linearGradient id="trashBody" x1="0" y1="0" x2="1" y2="0">
        <stop offset="0" stopColor="#e6e6e6" />
        <stop offset="0.300" stopColor="#d2d2d2" />
        <stop offset="0.700" stopColor="#d8d8d8" />
        <stop offset="1" stopColor="#f0f0f0" />
      </linearGradient>
    </defs>
    <path d="M4 14c0 11 77 11 77 0l-9 73c-1 12-57 12-59 0z" fill="url(#trashBody)" />
    <path d="M13 84c6 7 52 7 59 0-1 14-57 15-59 0z" fill="#f6f7f9" />
    <path d="M30 30c14 2 26-1 34-8-2 12-20 18-34 8z" fill="#efefef" />
    <ellipse cx="42.500" cy="14" rx="38" ry="8" fill="#dedede" stroke="#f4f4f4" />
    <path d="m8 14 8-8 8 1 6-6 10 5 8-5 8 6 12-1 9 8-8 7-14 2H22z" fill="#efefef" />
    <path d="m12 12 7-5 6 6-6 5zM62 8l9 3-3 6-8-3z" fill="#999" />
    <path d="m20 18 9-4 6 7H24z" fill="#5c2622" />
    <path d="m28 9 9-2 4 4-9 3z" fill="#4cc0d8" />
    <path d="m48 13 7-7 8 5-4 9-12 2z" fill="#3a4f86" />
    <path d="m45 18 7-3 3 6-8 1z" fill="#c0643a" />
  </svg>
);

type DockItem = { name: string; icon: ReactNode; running?: boolean };

const apps: DockItem[] = [
  { name: "Finder", icon: finder, running: true },
  { name: "Launchpad", icon: launchpad },
  { name: "Safari", icon: safari },
  { name: "Firefox", icon: firefox },
  { name: "Chrome", icon: chrome, running: true },
  { name: "Outlook", icon: outlook, running: true },
  { name: "Excel", icon: excel },
  { name: "Missing app", icon: unknownApp },
  { name: "Zoom", icon: zoomApp, running: true },
  { name: "Messages", icon: messages },
  { name: "Maps", icon: maps },
  { name: "Photos", icon: photos },
  { name: "FaceTime", icon: facetime },
  { name: "Calendar", icon: calendar },
  { name: "Reminders", icon: reminders },
  { name: "Notes", icon: notes },
  { name: "Podcasts", icon: podcasts },
  { name: "Music", icon: music },
  { name: "Pages", icon: pages },
  { name: "App Store", icon: appStore },
  { name: "Preview", icon: preview },
  { name: "Terminal", icon: terminal },
  { name: "Visual Studio Code", icon: vscode, running: true },
];

const utilities: DockItem[] = [
  { name: "Bitdefender", icon: bitdefender },
  { name: "System Preferences", icon: settings },
  { name: "Numbers", icon: numbers },
];

function DockButton({ item }: { item: DockItem }) {
  return (
    <button aria-label={item.name} className="relative shrink-0">
      {item.icon}
      {item.running && <span className="absolute -bottom-[26px] left-[39px] h-2 w-2 rounded-full bg-[#4a4a4a]" />}
    </button>
  );
}

function Dock() {
  return (
    <footer className="relative z-10 mt-1 mr-[97px] mb-[10px] ml-[98px] flex h-[138px] shrink-0 items-start rounded-[40px] border-2 border-[#f2f2f2] bg-[#c8c8c8] pt-[18px] pr-[20px] pl-[19px] shadow-[0_0_0_2px_#2b2b2b,0_0_100px_rgba(0,0,0,0.3)]">
      <div className="flex flex-1 justify-between">
        {apps.map((a) => (
          <DockButton key={a.name} item={a} />
        ))}
      </div>
      <span className="-mt-1 mr-[38px] ml-[43px] h-[102px] w-[2px] bg-[#8f8f8f]" />
      <div className="flex gap-[30px]">
        {utilities.map((a) => (
          <DockButton key={a.name} item={a} />
        ))}
      </div>
      <span className="-mt-1 mr-[38px] ml-[43px] h-[102px] w-[2px] bg-[#8f8f8f]" />
      <button aria-label="Trash" className="-mt-2 shrink-0">
        {trash}
      </button>
    </footer>
  );
}

/* ---------- Desktop ---------- */

function Wallpaper() {
  return (
    <div className="absolute inset-0 overflow-hidden bg-[#160824]">
      <div className="absolute right-0 bottom-0 h-[300px] w-[1150px] bg-[linear-gradient(to_right,#000_0%,#000_55%,#3a0612_68%,#d81e0c_80%,#fb6a2a_92%,#fd8a40_100%)]" />
      <div className="absolute right-0 bottom-0 h-[160px] w-[110px] bg-[linear-gradient(to_top,transparent_20%,#b8662f)]" />
      <div className="absolute bottom-0 left-[868px] h-[12px] w-[1560px] bg-[linear-gradient(to_right,#f5a03a_0,#e03020_18px,#000_50px,#0a0512_60%,#33203c_100%)]" />
      <div className="absolute bottom-0 left-[2420px] h-[12px] w-[580px] bg-[linear-gradient(to_right,#2b2b2b,#707068)]" />
    </div>
  );
}

function MailWindow() {
  return (
    <div className="absolute top-[267px] bottom-0 -left-6 w-[892px] bg-[linear-gradient(to_bottom,#c9c9c9,#dedede_12%,#dcdcdc_90%,#cfcfcf)]">
      <div className="h-[105px] border-t-2 border-b-[16px] border-t-[#dfe6ee] border-b-[#4a6f9e] bg-[#3b5673] shadow-[inset_0_14px_0_#4a6f9e]" />
      <p className="pt-[36px] pl-[15px] text-[28px] leading-9 text-[#333]">ov</p>
      <div className="absolute top-[209px] bottom-[66px] left-6 w-[800px] overflow-hidden rounded-2xl bg-[linear-gradient(to_bottom,#dcdcdc,#e6e6e6_90%,#f2f2f2)]" />
      <div className="absolute bottom-[48px] left-0 h-[2px] w-full bg-[#333]" />
      <div className="absolute bottom-[98px] left-[74px] h-[54px] overflow-hidden text-[27px] leading-8 font-medium text-black">
        <p>send</p>
        <p>conditions</p>
      </div>
    </div>
  );
}

export default function App() {
  return (
    <div className="relative flex h-screen w-full flex-col overflow-hidden font-['Inter','Noto_Sans',sans-serif]">
      <Wallpaper />
      <MailWindow />
      <MenuBar />
      <section className="relative mt-[2px] mr-[1px] ml-5 flex min-h-0 flex-1 flex-col overflow-hidden rounded-[20px] bg-white shadow-[0_0_0_2px_#333,0_20px_60px_rgba(0,0,0,0.45)]">
        <TabStrip />
        <Toolbar />
        <BookmarksBar />
        <WeatherPage />
        <div className="pointer-events-none absolute inset-0 rounded-[20px] border-t-2 border-white/80" />
      </section>
      <Dock />
    </div>
  );
}
